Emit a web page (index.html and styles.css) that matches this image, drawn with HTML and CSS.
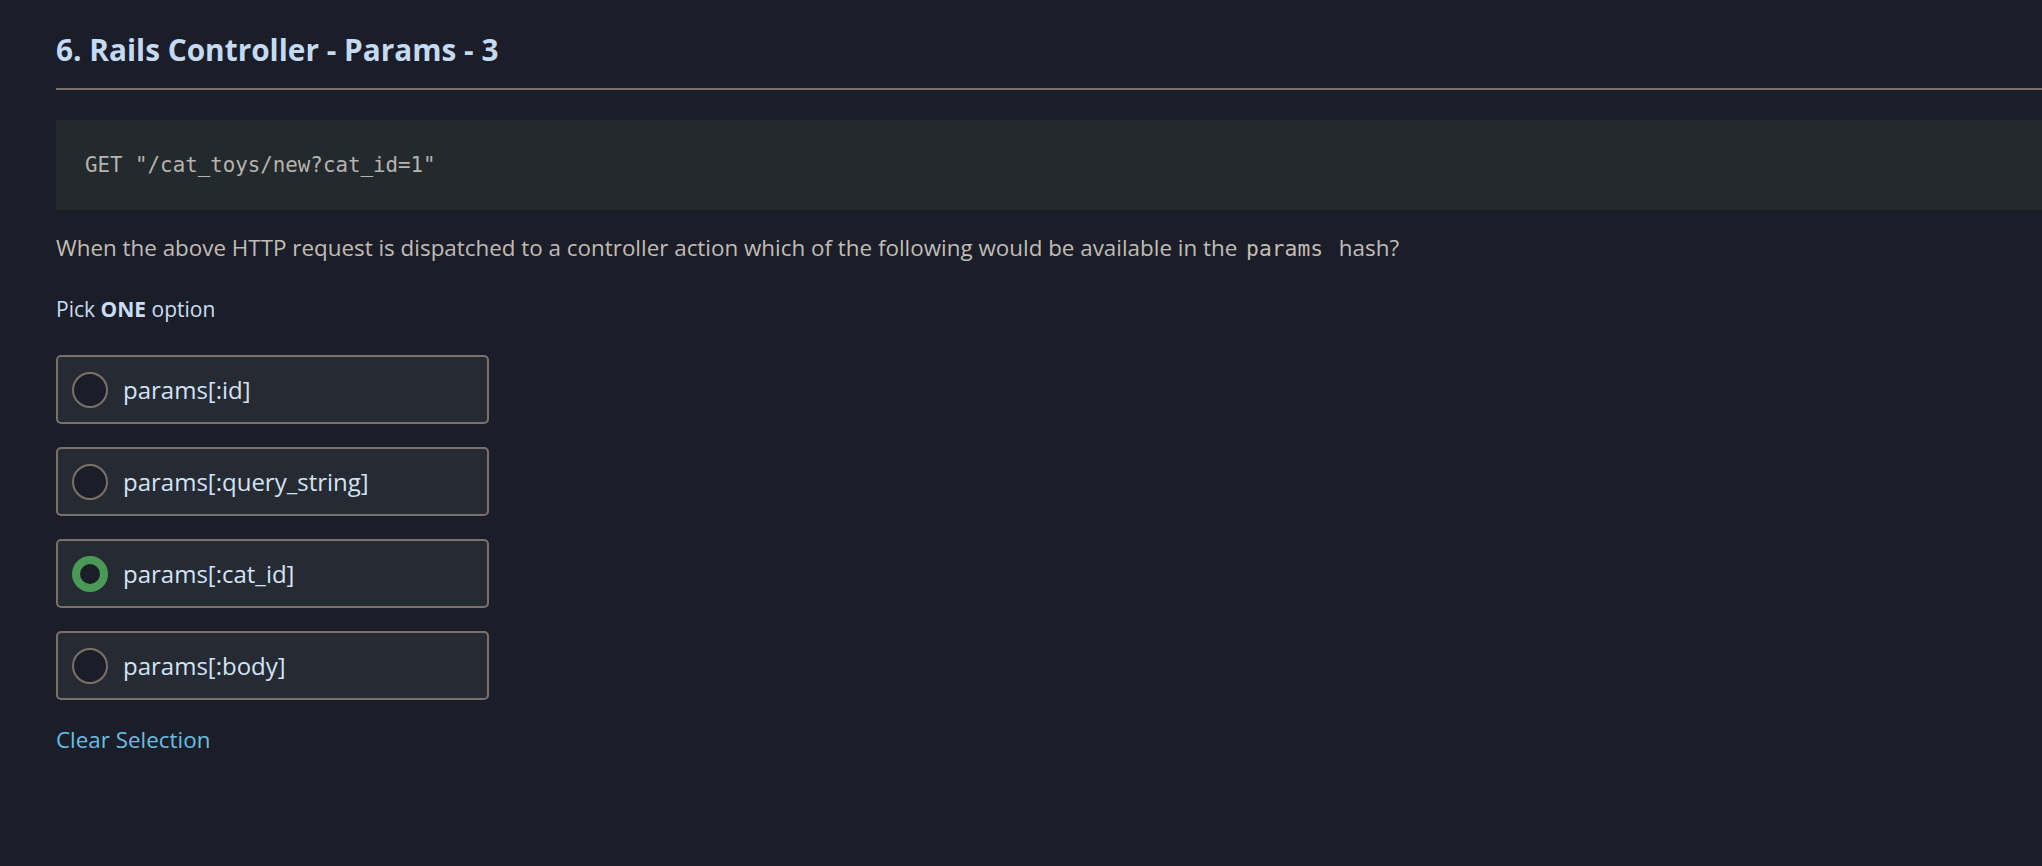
FILE: index.html
```html
<!DOCTYPE html>
<html lang="en">
<head>
<meta charset="utf-8">
<title>Rails Controller - Params - 3</title>
<link rel="stylesheet" href="styles.css">
</head>
<body>
<main class="question">
  <h2 class="title">6. Rails Controller - Params - 3</h2>
  <pre class="code-block"><code>GET "/cat_toys/new?cat_id=1"</code></pre>
  <p class="prompt">When the above HTTP request is dispatched to a controller action which of the following would be available in the <code class="inline-code">params</code> hash?</p>
  <p class="pick">Pick <strong>ONE</strong> option</p>
  <ul class="options">
    <li class="option"><span class="radio"></span><span class="label">params[:id]</span></li>
    <li class="option"><span class="radio"></span><span class="label">params[:query_string]</span></li>
    <li class="option"><span class="radio radio-checked"></span><span class="label">params[:cat_id]</span></li>
    <li class="option"><span class="radio"></span><span class="label">params[:body]</span></li>
  </ul>
  <a class="clear" href="#">Clear Selection</a>
</main>
</body>
</html>
```
FILE: styles.css
```css
html, body {
  margin: 0;
  padding: 0;
  background: #1b1e28;
}
body {
  font-family: "Open Sans", "Noto Sans", sans-serif;
  overflow: hidden;
}
.question {
  padding: 30px 0 0 56px;
  display: flex;
  flex-direction: column;
  align-items: stretch;
}
.title {
  margin: 0;
  font-size: 29.8px;
  font-weight: 700;
  line-height: 40px;
  color: #c4daf2;
  padding-bottom: 18px;
  border-bottom: 2px solid #7b7168;
}
.code-block {
  margin: 30px 0 0 0;
  padding: 33px 29px;
  background: #222a2e;
  font-family: "DejaVu Sans Mono", monospace;
  font-size: 20.8px;
  line-height: 24px;
  color: #b8b3ad;
}
.prompt {
  margin: 0;
  padding-top: 22px;
  font-size: 22.4px;
  line-height: 32px;
  color: #c1bcb5;
}
.inline-code {
  font-family: "DejaVu Sans Mono", monospace;
  font-size: 21.3px;
  padding: 0 10px 0 3px;
}
.pick {
  margin: 0;
  padding-top: 29px;
  font-size: 21px;
  line-height: 30px;
  color: #c9ddf3;
}
.pick strong {
  font-weight: 700;
}
.options {
  list-style: none;
  margin: 0;
  padding: 31px 0 0 0;
  display: flex;
  flex-direction: column;
  gap: 23px;
  align-items: flex-start;
}
.option {
  box-sizing: border-box;
  width: 433px;
  height: 69px;
  border: 2px solid #7b7168;
  border-radius: 5px;
  background: #262a33;
  display: flex;
  align-items: center;
  padding-left: 14px;
  gap: 15px;
}
.radio {
  box-sizing: border-box;
  width: 36px;
  height: 36px;
  border-radius: 50%;
  border: 2px solid #7b7168;
  background: #1b1e28;
  flex: none;
}
.radio-checked {
  border: 8px solid #4a9a55;
}
.label {
  font-size: 24px;
  color: #d3e3f5;
  line-height: 32px;
}
.clear {
  align-self: flex-start;
  margin-top: 24px;
  font-size: 22.4px;
  line-height: 32px;
  color: #68bfe3;
  text-decoration: none;
}
```
